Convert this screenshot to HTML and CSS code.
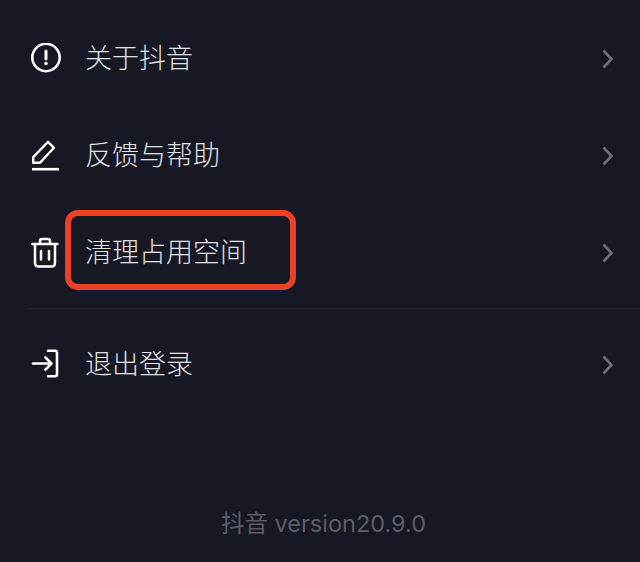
FILE: index.html
```html
<!DOCTYPE html>
<html lang="zh-CN">

<head>
    <meta charset="UTF-8">
    <title>设置</title>
    <link rel="stylesheet" href="styles.css">
</head>

<body>

<section class="menu">
    <div class="row">
        <svg class="icon" viewBox="0 0 32 32">
            <circle cx="16" cy="14.5" r="13.7" fill="none" stroke="#fff" stroke-width="2.6"/>
            <path d="M16 8v8" fill="none" stroke="#fff" stroke-width="3" stroke-linecap="round"/>
            <circle cx="16" cy="20.500" r="1.8" fill="#fff"/>
        </svg>
        <span class="label">关于抖音</span>
        <svg class="arrow" viewBox="0 0 14 22"><path d="M2.500 2.500 10.500 11 2.500 19.500"/></svg>
    </div>
    <div class="row">
        <svg class="icon" viewBox="0 0 32 32">
            <path d="M3.200 22.800v-5.600L18 1.800l6 6L10 22.800z" fill="none" stroke="#fff" stroke-width="2.400" stroke-linejoin="round"/>
            <path d="M2 29.200h27" fill="none" stroke="#fff" stroke-width="2.600"/>
        </svg>
        <span class="label">反馈与帮助</span>
        <svg class="arrow" viewBox="0 0 14 22"><path d="M2.500 2.500 10.500 11 2.500 19.500"/></svg>
    </div>
    <div class="row">
        <svg class="icon" viewBox="0 0 32 32">
            <path d="M2.500 7h25M10 7V4q0-2 2-2h6q2 0 2 2v3M5 7.500V26q0 3.500 3.500 3.500h13q3.500 0 3.500-3.500V7.500M11 14v8.500M19 14v8.500" fill="none" stroke="#fff" stroke-width="2.500" stroke-linecap="round"/>
        </svg>
        <span class="label">清理占用空间</span>
        <svg class="arrow" viewBox="0 0 14 22"><path d="M2.500 2.500 10.500 11 2.500 19.500"/></svg>
        <div class="highlight"></div>
    </div>
    <div class="divider"></div>
    <div class="row">
        <svg class="icon" viewBox="0 0 32 32">
            <path d="M3 14.500h18M15.500 8.500l6 6-6 6M18 1.800h7q2 0 2 2v21.400q0 2-2 2h-7" fill="none" stroke="#fff" stroke-width="2.600" stroke-linecap="round" stroke-linejoin="round"/>
        </svg>
        <span class="label">退出登录</span>
        <svg class="arrow" viewBox="0 0 14 22"><path d="M2.500 2.500 10.500 11 2.500 19.500"/></svg>
    </div>
</section>

<footer class="version">抖音 version20.9.0</footer>

</body>

</html>
```

FILE: styles.css
```css
html, body {
    height: 100%;
}

body {
    margin: 0;
    padding-top: 10px;
    box-sizing: border-box;
    overflow: hidden;
    background-color: #161823;
    font-family: "Inter", "Noto Sans CJK SC", sans-serif;
    display: flex;
    flex-direction: column;
}

.row {
    position: relative;
    display: flex;
    align-items: center;
    height: 97px;
    padding: 0 25px 0 30px;
}

.icon {
    width: 32px;
    height: 32px;
    margin-right: 23px;
    flex-shrink: 0;
}

.label {
    flex: 1;
    padding-bottom: 4px;
    font-size: 27px;
    color: #e2e2e4;
    font-weight: 300;
}

.arrow {
    width: 14px;
    height: 22px;
    fill: none;
    stroke: #6d6e77;
    stroke-width: 2.6;
}

/* roter Rahmen liegt ueber der Zeile */
.highlight {
    position: absolute;
    left: 65px;
    top: 6px;
    width: 231px;
    height: 80px;
    box-sizing: border-box;
    border: 6px solid #ee4027;
    border-radius: 13px;
}

.divider {
    height: 1px;
    margin: 7px 0 7px 27px;
    background-color: #22242f;
}

.version {
    margin-top: 95px;
    padding-left: 7px;
    text-align: center;
    font-size: 23.500px;
    line-height: 32px;
    color: #5c5d67;
}
```
